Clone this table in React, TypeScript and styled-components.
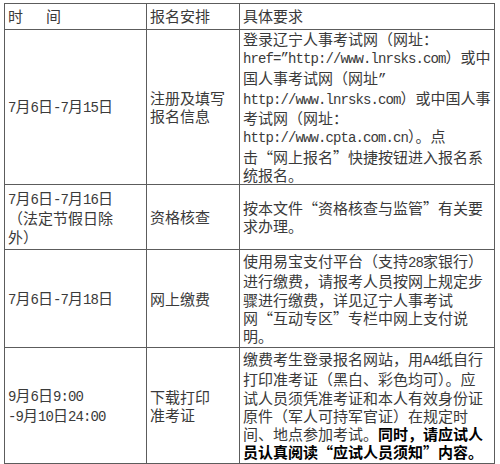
import styled, { createGlobalStyle } from "styled-components";

const GlobalStyle = createGlobalStyle`
  html, body {
    margin: 0;
    padding: 0;
    background: #fff;
  }
  body {
    font-family: "Noto Sans CJK SC", "Noto Sans", sans-serif;
    color: #3a3a3a;
  }
`;

const Page = styled.div`
  padding: 3px 0 0 4px;
`;

const Table = styled.table`
  border-collapse: collapse;
  table-layout: fixed;
  width: 490px;
  font-size: 15px;
  line-height: 18.3px;
`;

const Row = styled.tr<{ $h: number }>`
  height: ${(p) => p.$h}px;
`;

const Cell = styled.td<{ $dark?: boolean }>`
  border: 1px solid #5c5c5c;
  ${(p) => (p.$dark ? "border-left-color: #111;" : "")}
  padding: 0 3px;
  vertical-align: middle;
  white-space: nowrap;
  color: #3a3a3a;
`;

const HeadGap = styled.span`
  display: inline-block;
  width: 23px;
`;

const Mono = styled.span`
  font-family: "Liberation Mono", "DejaVu Sans Mono", monospace;
  font-size: 14px;
  letter-spacing: -0.9px;
`;

/* full-width Chinese quotation marks: the glyph sits on the inner side of a 1em box */
const Q = styled.span<{ $open?: boolean }>`
  display: inline-block;
  width: 1em;
  text-align: ${(p) => (p.$open ? "right" : "left")};
`;

const Strong = styled.span`
  font-weight: 700;
  color: #000;
`;

export default function App() {
  return (
    <Page>
      <GlobalStyle />
      <Table>
        <colgroup>
          <col style={{ width: 142 }} />
          <col style={{ width: 93 }} />
          <col style={{ width: 255 }} />
        </colgroup>
        <tbody>
          <Row $h={26}>
            <Cell>
              时<HeadGap />间
            </Cell>
            <Cell>报名安排</Cell>
            <Cell $dark>具体要求</Cell>
          </Row>
          <Row $h={152}>
            <Cell>
              <Mono>7</Mono>月<Mono>6</Mono>日<Mono>-7</Mono>月<Mono>15</Mono>日
            </Cell>
            <Cell>
              注册及填写
              <br />
              报名信息
            </Cell>
            <Cell $dark>
              登录辽宁人事考试网（网址：
              <br />
              <Mono>href=”http://www.lnrsks.com</Mono>）或中
              <br />
              国人事考试网（网址<Mono>”</Mono>
              <br />
              <Mono>http://www.lnrsks.com</Mono>）或中国人事
              <br />
              考试网（网址：
              <br />
              <Mono>http://www.cpta.com.cn</Mono>）。点
              <br />
              击<Q $open>“</Q>网上报名<Q>”</Q>快捷按钮进入报名系
              <br />
              统报名。
            </Cell>
          </Row>
          <Row $h={65}>
            <Cell>
              <Mono>7</Mono>月<Mono>6</Mono>日<Mono>-7</Mono>月<Mono>16</Mono>日
              <br />
              （法定节假日除
              <br />
              外）
            </Cell>
            <Cell>资格核查</Cell>
            <Cell $dark>
              按本文件<Q $open>“</Q>资格核查与监管<Q>”</Q>有关要
              <br />
              求办理。
            </Cell>
          </Row>
          <Row $h={98}>
            <Cell>
              <Mono>7</Mono>月<Mono>6</Mono>日<Mono>-7</Mono>月<Mono>18</Mono>日
            </Cell>
            <Cell>网上缴费</Cell>
            <Cell $dark>
              使用易宝支付平台（支持<Mono>28</Mono>家银行）
              <br />
              进行缴费，请报考人员按网上规定步
              <br />
              骤进行缴费，详见辽宁人事考试
              <br />
              网<Q $open>“</Q>互动专区<Q>”</Q>专栏中网上支付说
              <br />
              明。
            </Cell>
          </Row>
          <Row $h={116}>
            <Cell>
              <Mono>9</Mono>月<Mono>6</Mono>日<Mono>9:00</Mono>
              <br />
              <Mono>-9</Mono>月<Mono>10</Mono>日<Mono>24:00</Mono>
            </Cell>
            <Cell>
              下载打印
              <br />
              准考证
            </Cell>
            <Cell $dark>
              缴费考生登录报名网站，用<Mono>A4</Mono>纸自行
              <br />
              打印准考证（黑白、彩色均可）。应
              <br />
              试人员须凭准考证和本人有效身份证
              <br />
              原件（军人可持军官证）在规定时
              <br />
              间、地点参加考试。<Strong>同时，请应试人</Strong>
              <br />
              <Strong>
                员认真阅读<Q $open>“</Q>应试人员须知<Q>”</Q>内容。
              </Strong>
            </Cell>
          </Row>
        </tbody>
      </Table>
    </Page>
  );
}
